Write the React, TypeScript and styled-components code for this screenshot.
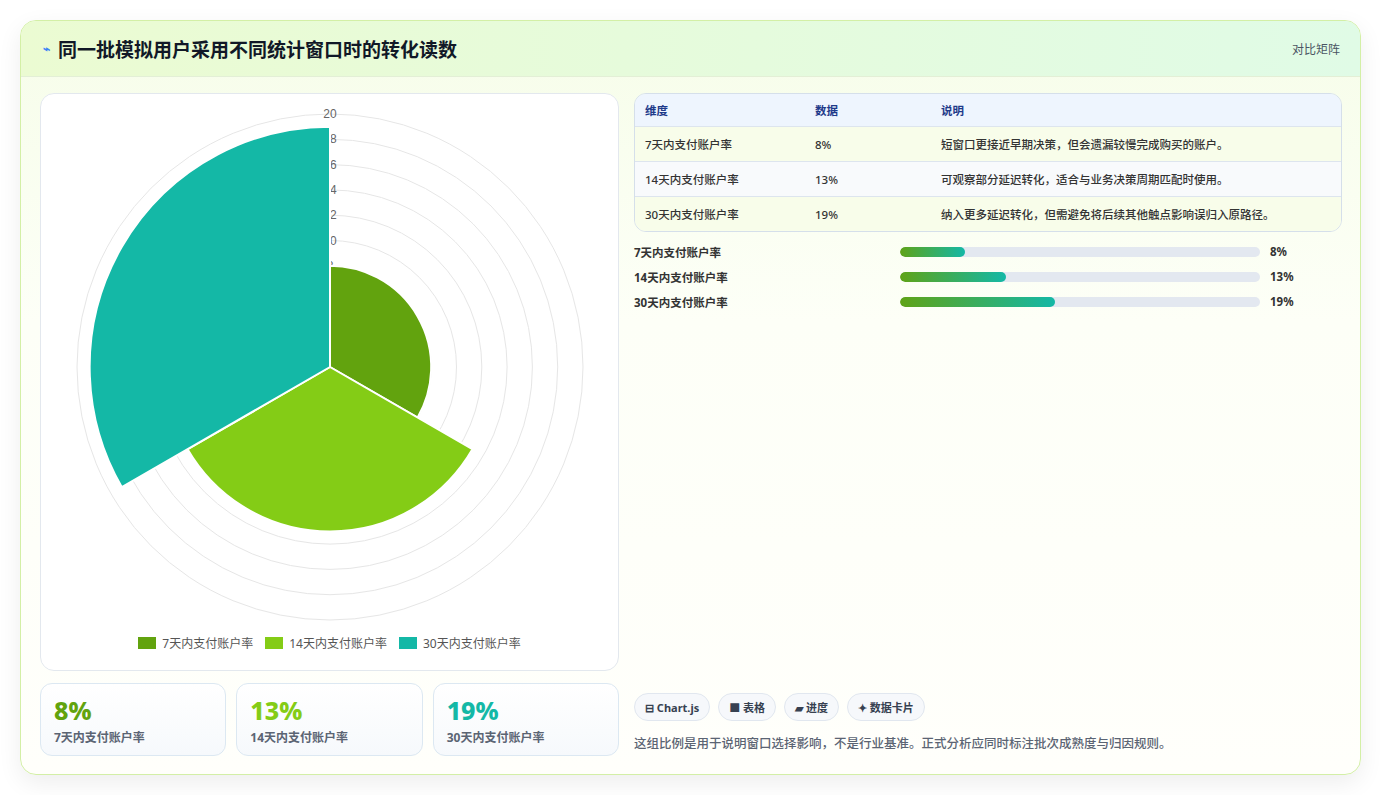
import React from "react";
import styled, { createGlobalStyle } from "styled-components";

const Global = createGlobalStyle`
  html, body { margin: 0; padding: 0; background: #fff; }
  body { font-family: "Noto Sans", "Noto Sans CJK SC", sans-serif; color: #1f2937; }
`;

const Page = styled.div`
  padding: 20px;
  box-sizing: border-box;
  width: 1381px;
  height: 795px;
`;
const Card = styled.div`
  height: 755px;
  box-sizing: border-box;
  border: 1px solid #d3efa6;
  border-radius: 16px;
  background: linear-gradient(180deg, #f6fde9 0%, #fdfff7 40%, #fffffb 100%);
  box-shadow: 0 8px 24px rgba(0,0,0,0.07);
  display: flex;
  flex-direction: column;
  overflow: hidden;
`;
const Header = styled.div`
  height: 55px;
  flex: none;
  display: flex;
  align-items: center;
  justify-content: space-between;
  padding: 0 20px 0 22px;
  background: linear-gradient(90deg, #ebfbd2, #e0fbe6);
  border-bottom: 1px solid #e3efd6;
`;
const Title = styled.h1`
  margin: 0;
  font-size: 19px;
  font-weight: 700;
  color: #111827;
  display: flex;
  align-items: center;
  gap: 8px;
`;
const Tag = styled.span`
  font-size: 12px;
  color: #4b5563;
`;
const Body = styled.div`
  flex: 1;
  display: grid;
  grid-template-columns: 579px 1fr;
  gap: 15px;
  padding: 16px 18px 18px 19px;
`;
const Left = styled.div`
  display: flex;
  flex-direction: column;
  gap: 12px;
`;
const ChartBox = styled.div`
  height: 578px;
  box-sizing: border-box;
  border: 1px solid #e3e8ee;
  border-radius: 14px;
  background: #fff;
  display: flex;
  flex-direction: column;
  align-items: center;
`;
const Legend = styled.div`
  display: flex;
  gap: 12px;
  font-size: 12px;
  color: #555;
  margin-top: 4px;
`;
const LegendItem = styled.span`
  display: flex;
  align-items: center;
  gap: 6px;
`;
const Swatch = styled.span<{ c: string }>`
  width: 18px;
  height: 12px;
  background: ${p => p.c};
`;
const Stats = styled.div`
  display: grid;
  grid-template-columns: repeat(3, 1fr);
  gap: 10px;
`;
const Stat = styled.div`
  height: 73px;
  box-sizing: border-box;
  border: 1px solid #dce8f2;
  border-radius: 12px;
  background: linear-gradient(180deg, #fff, #f6f9fc);
  padding: 10px 13px;
`;
const StatVal = styled.div<{ c: string }>`
  font-size: 25px;
  font-weight: 800;
  color: ${p => p.c};
  line-height: 32px;
`;
const StatLabel = styled.div`
  font-size: 12px;
  font-weight: 700;
  color: #5b6473;
  margin-top: 2px;
`;
const Right = styled.div`
  display: flex;
  flex-direction: column;
`;
const Table = styled.div`
  border: 1px solid #d5dfea;
  border-radius: 12px;
  overflow: hidden;
  font-size: 11.5px;
`;
const Row = styled.div<{ bg: string; head?: boolean }>`
  display: grid;
  grid-template-columns: 170px 126px 1fr;
  height: ${p => (p.head ? 32 : 34)}px;
  align-items: center;
  padding: 0 10px;
  background: ${p => p.bg};
  border-top: ${p => (p.head ? "none" : "1px solid #dde5ee")};
  color: ${p => (p.head ? "#1e3a8a" : "#333")};
  font-weight: ${p => (p.head ? 700 : 500)};
`;
const Bars = styled.div`
  display: flex;
  flex-direction: column;
  gap: 8px;
  margin-top: 11px;
`;
const BarRow = styled.div`
  display: grid;
  grid-template-columns: 266px 370px 40px;
  align-items: center;
  font-size: 11.5px;
  font-weight: 700;
  color: #333;
  height: 17px;
`;
const Track = styled.div`
  height: 10px;
  border-radius: 5px;
  background: #e3e8f0;
  margin-right: 10px;
  overflow: hidden;
`;
const Fill = styled.div`
  height: 100%;
  border-radius: 5px;
  background: linear-gradient(90deg, #5fa317, #14b8a6);
`;
const Spacer = styled.div`flex: 1;`;
const Chips = styled.div`
  display: flex;
  gap: 8px;
`;
const Chip = styled.span`
  height: 28px;
  box-sizing: border-box;
  padding: 0 10px;
  border: 1px solid #e1e7ef;
  border-radius: 14px;
  background: #f6f8fb;
  font-size: 11px;
  font-weight: 700;
  color: #374151;
  display: flex;
  align-items: center;
  gap: 4px;
`;
const Note = styled.p`
  margin: 12px 0 4px;
  font-size: 12.5px;
  font-weight: 500;
  color: #5b6473;
`;

const cx = 289, cy = 273, k = 12.65;
const wedge = (v: number, a0: number, a1: number) => {
  const r = v * k;
  const t = (a: number) => (a * Math.PI) / 180;
  const x0 = cx + r * Math.cos(t(a0)), y0 = cy + r * Math.sin(t(a0));
  const x1 = cx + r * Math.cos(t(a1)), y1 = cy + r * Math.sin(t(a1));
  return `M${cx},${cy} L${x0},${y0} A${r},${r} 0 0 1 ${x1},${y1} Z`;
};

const Polar = () => (
  <svg width="578" height="536" viewBox="0 0 578 536" style={{ display: "block" }}>
    {[2, 4, 6, 8, 10, 12, 14, 16, 18, 20].map(v => (
      <circle key={v} cx={cx} cy={cy} r={v * k} fill="none" stroke="#e6e6e6" strokeWidth="1" />
    ))}
    {[8, 10, 12, 14, 16, 18, 20].map(v => (
      <text key={v} x={cx} y={cy - v * k + 4} textAnchor="middle" fontSize="12" fill="#666" fontFamily="Liberation Sans, sans-serif">{v}</text>
    ))}
    <path d={wedge(8, -90, 30)} fill="#62a30e" stroke="#fff" strokeWidth="2" />
    <path d={wedge(13, 30, 150)} fill="#84cc16" stroke="#fff" strokeWidth="2" />
    <path d={wedge(19, 150, 270)} fill="#14b8a6" stroke="#fff" strokeWidth="2" />
  </svg>
);

const rows = [
  ["7天内支付账户率", "8%", "短窗口更接近早期决策，但会遗漏较慢完成购买的账户。", "#f8fdea"],
  ["14天内支付账户率", "13%", "可观察部分延迟转化，适合与业务决策周期匹配时使用。", "#f8fafc"],
  ["30天内支付账户率", "19%", "纳入更多延迟转化，但需避免将后续其他触点影响误归入原路径。", "#f8fdea"],
];

export default function App() {
  return (
    <Page>
      <Global />
      <Card>
        <Header>
          <Title><span style={{ fontSize: 12, color: "#3b82f6" }}>⌁</span>同一批模拟用户采用不同统计窗口时的转化读数</Title>
          <Tag>对比矩阵</Tag>
        </Header>
        <Body>
          <Left>
            <ChartBox>
              <Polar />
              <Legend>
                <LegendItem><Swatch c="#62a30e" />7天内支付账户率</LegendItem>
                <LegendItem><Swatch c="#84cc16" />14天内支付账户率</LegendItem>
                <LegendItem><Swatch c="#14b8a6" />30天内支付账户率</LegendItem>
              </Legend>
            </ChartBox>
            <Stats>
              <Stat><StatVal c="#62a30e">8%</StatVal><StatLabel>7天内支付账户率</StatLabel></Stat>
              <Stat><StatVal c="#84cc16">13%</StatVal><StatLabel>14天内支付账户率</StatLabel></Stat>
              <Stat><StatVal c="#14b8a6">19%</StatVal><StatLabel>30天内支付账户率</StatLabel></Stat>
            </Stats>
          </Left>
          <Right>
            <Table>
              <Row head bg="#eef5fe"><span>维度</span><span>数据</span><span>说明</span></Row>
              {rows.map(r => (
                <Row key={r[0]} bg={r[3]}><span>{r[0]}</span><span>{r[1]}</span><span>{r[2]}</span></Row>
              ))}
            </Table>
            <Bars>
              {[["7天内支付账户率", 8], ["14天内支付账户率", 13], ["30天内支付账户率", 19]].map(([l, v]) => (
                <BarRow key={l as string}>
                  <span>{l}</span>
                  <Track><Fill style={{ width: `${((v as number) / 44) * 100}%` }} /></Track>
                  <span>{v}%</span>
                </BarRow>
              ))}
            </Bars>
            <Spacer />
            <Chips>
              <Chip>⊟ Chart.js</Chip>
              <Chip>■ 表格</Chip>
              <Chip>▰ 进度</Chip>
              <Chip>✦ 数据卡片</Chip>
            </Chips>
            <Note>这组比例是用于说明窗口选择影响，不是行业基准。正式分析应同时标注批次成熟度与归因规则。</Note>
          </Right>
        </Body>
      </Card>
    </Page>
  );
}
